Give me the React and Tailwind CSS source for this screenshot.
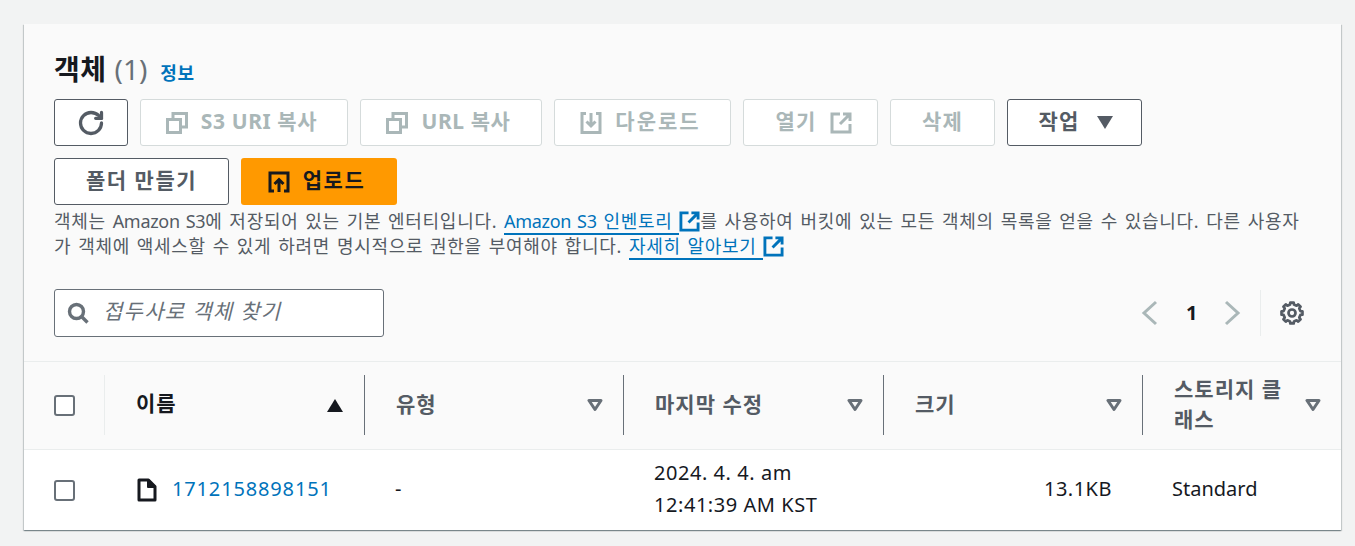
import { RotateCw } from "lucide-react";

const FONT = "font-['Noto_Sans','Noto_Sans_CJK_KR',sans-serif]";

function CopyIcon() {
  return (
    <svg width="22" height="22" viewBox="0 0 22 22" fill="none" stroke="currentColor" strokeWidth="3">
      <path d="M1.5 7.5h13v13h-13z" />
      <path d="M7 6.5V1.5h13.5v13.5H15.5" />
    </svg>
  );
}

function DownloadIcon() {
  return (
    <svg width="22" height="24" viewBox="0 0 22 24" fill="none" stroke="currentColor" strokeWidth="3">
      <path d="M6 2.5H2v19h18v-19h-4" />
      <path d="M11 2v13M6.5 10.5L11 15l4.5-4.5" />
    </svg>
  );
}

function ExternalIcon({ size = 22, strokeWidth = 3 }) {
  return (
    <svg width={size} height={size} viewBox="0 0 22 22" fill="none" stroke="currentColor" strokeWidth={strokeWidth}>
      <path d="M10 2H2v18h18v-8" />
      <path d="M13 2h7v7M19.5 2.5L10 12" />
    </svg>
  );
}

function UploadIcon() {
  return (
    <svg width="22" height="22" viewBox="0 0 22 22" fill="none" stroke="currentColor" strokeWidth="3">
      <path d="M6 20H2V2h18v18h-4" />
      <path d="M11 21V9M6.5 13L11 8.5l4.5 4.5" />
    </svg>
  );
}

function SearchIcon() {
  return (
    <svg width="22" height="22" viewBox="0 0 22 22" fill="none" stroke="#687078" strokeWidth="3.4">
      <circle cx="9.5" cy="9.5" r="7" />
      <path d="M14.5 14.5l6 6" />
    </svg>
  );
}

// 8 teeth outline
const gearPath =
  Array.from({ length: 8 }, (_, i) => {
    const a = (i * Math.PI) / 4;
    const pt = (r, d) => {
      const t = a + (d * Math.PI) / 180;
      return `${(12 + r * Math.sin(t)).toFixed(2)} ${(12 - r * Math.cos(t)).toFixed(2)}`;
    };
    return `${i === 0 ? "M" : "L"}${pt(8.6, -13)} L${pt(10.6, -9)} L${pt(10.6, 9)} L${pt(8.6, 13)}`;
  }).join(" ") + " Z";

function GearIcon() {
  return (
    <svg width="24" height="24" viewBox="0 0 24 24" fill="none" stroke="#545b64" strokeWidth="2.7" strokeLinejoin="round">
      <circle cx="12" cy="12" r="3.5" />
      <path d={gearPath} />
    </svg>
  );
}

function FileIcon() {
  return (
    <svg width="20" height="24" viewBox="0 0 20 24" fill="none" stroke="#16191f" strokeWidth="3" strokeLinejoin="round">
      <path d="M2 2h9.5L18 8.5V22H2z" />
      <path d="M11 2v7h7" fill="#16191f" strokeWidth="2" />
    </svg>
  );
}

function SortCaret() {
  return (
    <svg width="16" height="14" viewBox="0 0 16 14" fill="none" stroke="#687078" strokeWidth="3" strokeLinejoin="round">
      <path d="M2 2.5h12L8 11.5z" />
    </svg>
  );
}

function Checkbox() {
  return <span className="block w-[21px] h-[21px] rounded-[3px] border-2 border-[#687078] bg-white" />;
}

function Button({ children, disabled, className = "" }) {
  const look = disabled
    ? "border-[#d5dbdb] text-[#aab7b8]"
    : "border-[#545b64] text-[#545b64]";
  return (
    <button className={`h-[47px] flex items-center justify-center gap-[13px] rounded-[3px] border bg-white text-[21px] font-bold ${look} ${className}`}>
      {children}
    </button>
  );
}

function HeaderCell({ label, wrap }) {
  return (
    <div className="h-[60px] flex items-center justify-between border-l border-[#687078] pl-[31px]">
      <span className={`text-[21px] leading-[30px] tracking-[1px] font-bold text-[#545b64] -mt-[2px] ${wrap ? "w-[120px]" : ""}`}>
        {label}
      </span>
      <span className="mr-[20px]"><SortCaret /></span>
    </div>
  );
}

export default function App() {
  return (
    <div className={`${FONT} h-[546px] w-[1355px] overflow-hidden bg-[#f2f3f3] pt-6 pl-6`}>
      <div className="w-[1317px] h-[506px] bg-[#fafafa] shadow-[0_1px_1px_0_rgba(0,28,36,0.3),1px_1px_1px_0_rgba(0,28,36,0.15),-1px_1px_1px_0_rgba(0,28,36,0.15)]">
        <div className="h-[338px] border-b border-[#eaeded] px-[30px] pt-[26px]">
          <div className="flex items-baseline h-[43px]">
            <h2 className="text-[28px] leading-[38px] tracking-[0.5px] font-bold text-[#16191f]">객체</h2>
            <span className="ml-[8px] text-[28px] leading-[38px] text-[#687078]">(1)</span>
            <a className="ml-[13px] text-[18px] tracking-[0.5px] font-bold text-[#0073bb]">정보</a>
          </div>

          <div className="mt-[6px] flex flex-wrap gap-x-3 gap-y-3 w-[1100px]">
            <Button className="w-[74px]">
              <RotateCw size={28} strokeWidth={2.8} />
            </Button>
            <Button disabled className="w-[208px] pr-[5px] tracking-[0.6px]"><CopyIcon /><span className="-mt-[2px]">S3 URI 복사</span></Button>
            <Button disabled className="w-[182px] pr-[5px] tracking-[0.6px]"><CopyIcon /><span className="-mt-[2px]">URL 복사</span></Button>
            <Button disabled className="w-[177px] pr-[4px] tracking-[2px]"><DownloadIcon /><span className="-mt-[2px]">다운로드</span></Button>
            <Button disabled className="w-[135px] pl-[6px] tracking-[1.2px]"><span className="-mt-[2px]">열기</span><ExternalIcon /></Button>
            <Button disabled className="w-[105px] tracking-[1.2px]"><span className="-mt-[2px]">삭제</span></Button>
            <Button className="w-[135px] pl-[2px] gap-[17px] tracking-[1.2px]">
              <span className="-mt-[2px]">작업</span>
              <svg width="16" height="13" viewBox="0 0 16 13" fill="#545b64"><path d="M0 0h16L8 13z" /></svg>
            </Button>
            <Button className="w-[175px] tracking-[1.5px]"><span className="-mt-[2px]">폴더 만들기</span></Button>
            <button className="h-[47px] w-[156px] pr-[5px] flex items-center justify-center gap-[13px] rounded-[3px] bg-[#ff9900] text-[21px] tracking-[1.5px] font-bold text-[#16191f]">
              <UploadIcon />
              <span className="-mt-[2px]">업로드</span>
            </button>
          </div>

          <p className="mt-[4px] w-[1250px] text-[18px] leading-[25px] tracking-[0.7px] [word-spacing:1.5px] text-[#545b64]">
            객체는 <span className="tracking-[-0.3px]">Amazon S3</span>에 저장되어 있는 기본 엔터티입니다.{" "}
            <a className="text-[#0073bb] border-b-2 border-[#0073bb]"><span className="tracking-[-0.3px]">Amazon S3</span> 인벤토리 </a>
            <span className="inline-block align-[-4px] text-[#0073bb]"><ExternalIcon size={21} /></span>
            를 사용하여 버킷에 있는 모든 객체의 목록을 얻을 수 있습니다. 다른 사용자가 객체에 액세스할 수 있게 하려면 명시적으로 권한을 부여해야 합니다.{" "}
            <a className="text-[#0073bb] border-b-2 border-[#0073bb]">자세히 알아보기 </a>
            <span className="inline-block align-[-4px] text-[#0073bb]"><ExternalIcon size={21} /></span>
          </p>

          <div className="mt-[30px] flex items-center justify-between">
            <div className="w-[330px] h-[48px] flex items-center gap-[14px] pl-[12px] rounded-[3px] border border-[#687078] bg-white">
              <SearchIcon />
              <span className="text-[21px] tracking-[1.3px] italic text-[#687078] -mt-[2px]">접두사로 객체 찾기</span>
            </div>
            <div className="flex items-center h-[46px]">
              <svg width="18" height="26" viewBox="0 0 18 26" fill="none" stroke="#aab7b8" strokeWidth="3">
                <path d="M15 2L3 13l12 11" />
              </svg>
              <span className="mx-[27px] w-[10px] text-center text-[20px] font-bold text-[#16191f]">1</span>
              <svg width="18" height="26" viewBox="0 0 18 26" fill="none" stroke="#aab7b8" strokeWidth="3">
                <path d="M3 2l12 11L3 24" />
              </svg>
              <div className="ml-[19px] h-[46px] border-l border-[#eaeded] pl-[19px] pr-[7px] flex items-center">
                <GearIcon />
              </div>
            </div>
          </div>
        </div>

        <div className="h-[88px] pb-px grid grid-cols-[81px_259px_259px_260px_259px_199px] items-center border-b border-[#eaeded]">
          <div className="h-[60px] pl-[30px] flex items-center border-r border-[#eaeded]">
            <Checkbox />
          </div>
          <div className="h-[60px] flex items-center justify-between pl-[31px]">
            <span className="text-[21px] tracking-[1px] font-bold text-[#16191f] -mt-[2px]">이름</span>
            <svg width="16" height="13" viewBox="0 0 16 13" fill="#16191f" className="mr-[21px]"><path d="M8 0l8 13H0z" /></svg>
          </div>
          <HeaderCell label="유형" />
          <HeaderCell label="마지막 수정" />
          <HeaderCell label="크기" />
          <HeaderCell label="스토리지 클래스" wrap />
        </div>

        <div className="h-[80px] bg-white grid grid-cols-[81px_259px_259px_260px_259px_199px] items-center text-[20px] text-[#16191f]">
          <div className="pl-[30px]"><Checkbox /></div>
          <div className="pl-[32px] flex items-center gap-[15px]">
            <FileIcon />
            <a className="text-[#0073bb] tracking-[0.85px] -mt-[2px]">1712158898151</a>
          </div>
          <div className="pl-[31px] -mt-[2px]">-</div>
          <div className="pl-[31px] leading-[32px] tracking-[0.55px] -mt-[3px]">
            <div>2024. 4. 4. am</div>
            <div>12:41:39 AM KST</div>
          </div>
          <div className="pr-[30px] text-right tracking-[0.5px] -mt-[2px]">13.1KB</div>
          <div className="pl-[30px] -mt-[2px]">Standard</div>
        </div>
      </div>
    </div>
  );
}
